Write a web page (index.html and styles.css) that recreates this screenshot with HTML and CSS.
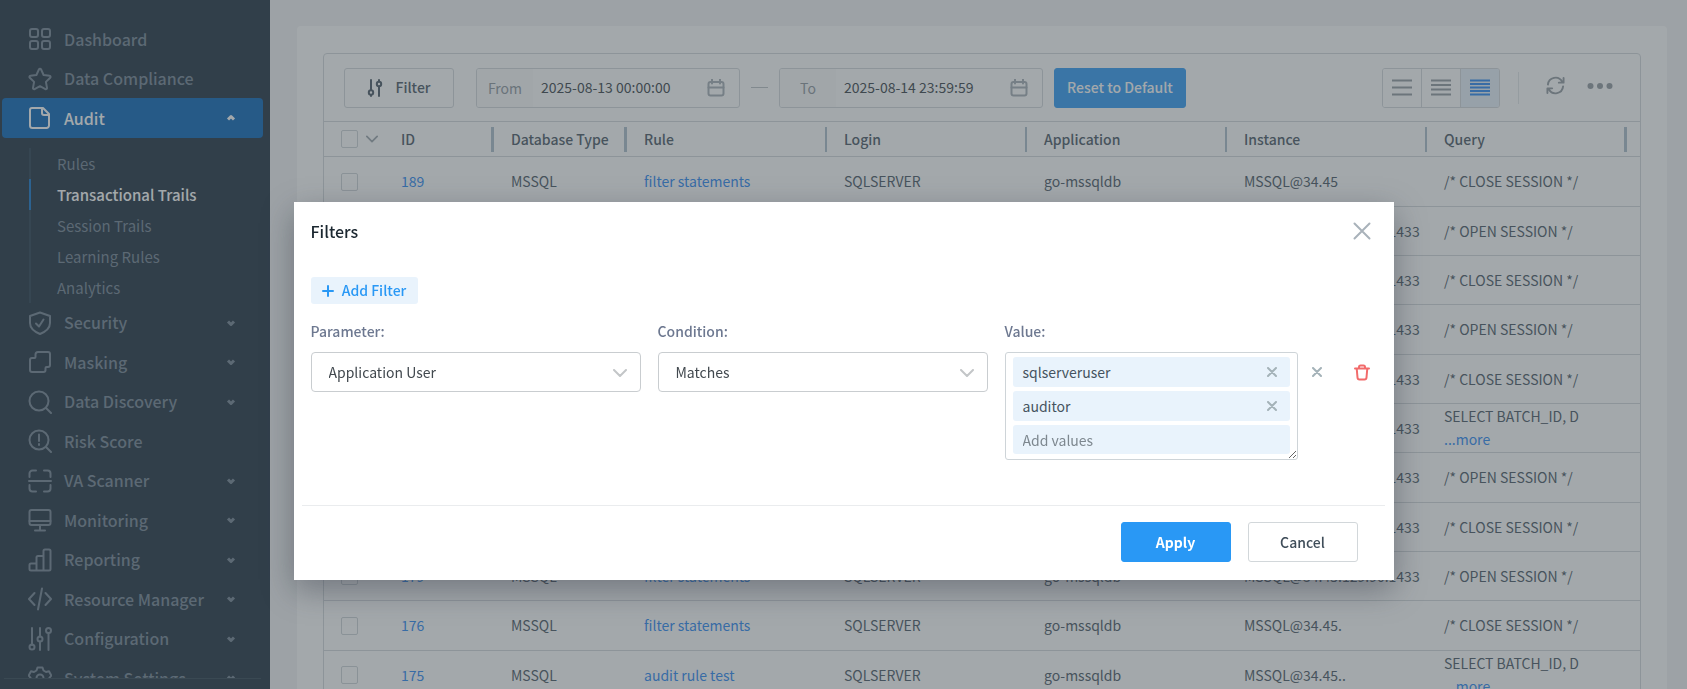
FILE: index.html
```html
<!DOCTYPE html>
<html lang="en">
<head>
<meta charset="utf-8">
<title>Transactional Trails</title>
<link rel="stylesheet" href="styles.css">
</head>
<body>
<div class="app">
  <aside class="sidebar">
    <nav class="nav-scroll" aria-label="Main">
      <ul class="nav">
        <li><a class="nav-link" href="#"><svg class="icon" viewBox="0 0 24 24"><rect x="2" y="2" width="8" height="8" rx="2"/><rect x="14" y="2" width="8" height="8" rx="2"/><rect x="2" y="14" width="8" height="8" rx="2"/><rect x="14" y="14" width="8" height="8" rx="2"/></svg><span>Dashboard</span></a></li>
        <li><a class="nav-link" href="#"><svg class="icon" viewBox="0 0 24 24"><path d="M12 1.800c.5 0 .9.3 1.100.7l2.500 5.500 6 .8c1 .1 1.300 1.200.6 1.900l-4.300 4.200 1.100 6c.2 1-.8 1.600-1.600 1.200L12 19.200l-5.400 2.900c-.8.4-1.800-.2-1.600-1.200l1.100-6-4.300-4.200c-.7-.7-.4-1.800.6-1.900l6-.8 2.500-5.500c.2-.4.6-.7 1.100-.7z"/></svg><span>Data Compliance</span></a></li>
        <li><a class="nav-link nav-link-active" href="#"><svg class="icon" viewBox="0 0 24 24"><path d="M4 2h11l6 6v11.500a2.500 2.500 0 0 1-2.500 2.500h-14A2.500 2.500 0 0 1 2 19.500V4a2 2 0 0 1 2-2z"/><path d="M14 2v5a2 2 0 0 0 2 2h5"/></svg><span>Audit</span><svg class="caret" viewBox="0 0 10 10"><path d="M2 6.500 5 3.500l3 3"/></svg></a>
          <ul class="subnav">
            <li><a href="#">Rules</a></li>
            <li class="current"><a href="#" aria-current="page">Transactional Trails</a></li>
            <li><a href="#">Session Trails</a></li>
            <li><a href="#">Learning Rules</a></li>
            <li><a href="#">Analytics</a></li>
          </ul>
        </li>
        <li><a class="nav-link" href="#"><svg class="icon" viewBox="0 0 24 24"><path d="M12 1.500 22 5v7c0 5-4 8.500-10 11C6 20.500 2 17 2 12V5z"/><path d="m8 12.500 3 3L15.500 8.500"/></svg><span>Security</span><svg class="caret" viewBox="0 0 10 10"><path d="m2 3.500 3 3 3-3"/></svg></a></li>
        <li><a class="nav-link" href="#"><svg class="icon" viewBox="0 0 24 24"><path d="M10 2h10a2 2 0 0 1 2 2v11a2 2 0 0 1-2 2h-1.500a1 1 0 0 0-1 1v2a2 2 0 0 1-2 2H4a2 2 0 0 1-2-2V10a2 2 0 0 1 2-2h2.500a1 1 0 0 0 1-1V4.500A2.500 2.500 0 0 1 10 2z"/></svg><span>Masking</span><svg class="caret" viewBox="0 0 10 10"><path d="m2 3.500 3 3 3-3"/></svg></a></li>
        <li><a class="nav-link" href="#"><svg class="icon" viewBox="0 0 24 24"><circle cx="11" cy="11" r="9.500"/><path d="m18 18 5 5"/></svg><span>Data Discovery</span><svg class="caret" viewBox="0 0 10 10"><path d="m2 3.500 3 3 3-3"/></svg></a></li>
        <li><a class="nav-link" href="#"><svg class="icon" viewBox="0 0 24 24"><circle cx="11" cy="11" r="9.500"/><path d="m18 18 5 5M11 5.500v6.500M11 15v1"/></svg><span>Risk Score</span></a></li>
        <li><a class="nav-link" href="#"><svg class="icon" viewBox="0 0 24 24"><path d="M1.500 8V4.500a3 3 0 0 1 3-3H8M16 1.500h3.500a3 3 0 0 1 3 3V8M22.500 16v3.500a3 3 0 0 1-3 3H16M8 22.500H4.500a3 3 0 0 1-3-3V16M1 12h22"/></svg><span>VA Scanner</span><svg class="caret" viewBox="0 0 10 10"><path d="m2 3.500 3 3 3-3"/></svg></a></li>
        <li><a class="nav-link" href="#"><svg class="icon" viewBox="0 0 24 24"><rect x="1.500" y="2" width="21" height="15" rx="2"/><path d="M1.500 13h21M12 17v5M7 22.500h10"/></svg><span>Monitoring</span><svg class="caret" viewBox="0 0 10 10"><path d="m2 3.500 3 3 3-3"/></svg></a></li>
        <li><a class="nav-link" href="#"><svg class="icon" viewBox="0 0 24 24"><path d="M8.500 22.500H3A1.500 1.500 0 0 1 1.500 21v-4A1.500 1.500 0 0 1 3 15.500h5.500zM8.500 22.500V9.500A1.500 1.500 0 0 1 10 8h5.500v14.500zM15.500 22.500V3A1.500 1.500 0 0 1 17 1.500h4A1.500 1.500 0 0 1 22.500 3v18a1.500 1.500 0 0 1-1.500 1.500z"/></svg><span>Reporting</span><svg class="caret" viewBox="0 0 10 10"><path d="m2 3.500 3 3 3-3"/></svg></a></li>
        <li><a class="nav-link" href="#"><svg class="icon" viewBox="0 0 24 24"><path d="M6.500 6 1 12l5.500 6M17.500 6l5.500 6-5.500 6M14 1.500 10 22.500"/></svg><span>Resource Manager</span><svg class="caret" viewBox="0 0 10 10"><path d="m2 3.500 3 3 3-3"/></svg></a></li>
        <li><a class="nav-link" href="#"><svg class="icon" viewBox="0 0 24 24"><path d="M4 1v17M12 1v8.500M12 14.500V23M20.500 6v17"/><circle cx="4" cy="20" r="2.500"/><circle cx="12" cy="12" r="2.500"/><circle cx="20.500" cy="3.500" r="2.500"/></svg><span>Configuration</span><svg class="caret" viewBox="0 0 10 10"><path d="m2 3.500 3 3 3-3"/></svg></a></li>
        <li><a class="nav-link" href="#"><svg class="icon" viewBox="0 0 24 24"><path d="M9.500 1.500h5l1 3 2.500 1.500 3-.7 2.300 4.200-2 2.500 2 2.500-2.300 4.200-3-.7-2.500 1.500-1 3h-5l-1-3L6 18l-3 .7L.7 14.500l2-2.500-2-2.500L3 5.300 6 6l2.500-1.500z"/><circle cx="12" cy="12" r="3.500"/></svg><span>System Settings</span><svg class="caret" viewBox="0 0 10 10"><path d="m2 3.500 3 3 3-3"/></svg></a></li>
      </ul>
    </nav>
    <div class="sidebar-foot"></div>
  </aside>

  <main class="content">
    <section class="card">
      <div class="panel">
        <div class="toolbar">
          <button class="btn btn-filter" type="button"><svg class="filter-icon" viewBox="0 0 16 18"><path d="M4 1v10M12 8v9"/><circle cx="4" cy="13.500" r="2.200"/><path d="M4 16v1M12 1v1"/><circle cx="12" cy="5" r="2.200"/></svg>Filter</button>
          <div class="date-range">
            <div class="date-box"><label class="date-label" for="from">From</label><input class="date-input" id="from" type="text" value="2025-08-13 00:00:00"><svg class="calendar" viewBox="0 0 18 18"><rect x="1.500" y="3" width="15" height="13.500" rx="2"/><path d="M1.500 8.500h15M5 .5v4M13 .5v4"/></svg></div>
            <span class="dash"></span>
            <div class="date-box"><label class="date-label" for="to">To</label><input class="date-input" id="to" type="text" value="2025-08-14 23:59:59"><svg class="calendar" viewBox="0 0 18 18"><rect x="1.500" y="3" width="15" height="13.500" rx="2"/><path d="M1.500 8.500h15M5 .5v4M13 .5v4"/></svg></div>
          </div>
          <button class="btn btn-reset" type="button">Reset to Default</button>
          <div class="views">
            <button type="button" aria-label="Loose rows"><svg viewBox="0 0 20 17"><path d="M0 1.500h20M0 8.500h20M0 15.500h20"/></svg></button>
            <button type="button" aria-label="Medium rows"><svg viewBox="0 0 20 17"><path d="M0 1.500h20M0 6h20M0 10.500h20M0 15.500h20"/></svg></button>
            <button type="button" class="selected" aria-label="Dense rows"><svg viewBox="0 0 20 17"><path d="M0 1.500h20M0 5h20M0 8.500h20M0 12h20M0 15.500h20"/></svg></button>
          </div>
          <span class="divider"></span>
          <button class="icon-btn" type="button" aria-label="Refresh"><svg class="refresh" viewBox="0 0 20 20"><path d="M2 9a8 8 0 0 1 15-3M18 11a8 8 0 0 1-15 3M18.500 2v5h-5M1.500 18v-5h5"/></svg></button>
          <button class="icon-btn" type="button" aria-label="More"><svg class="dots" viewBox="0 0 26 8"><circle cx="3.500" cy="4" r="3"/><circle cx="13" cy="4" r="3"/><circle cx="22.500" cy="4" r="3"/></svg></button>
        </div>
        <table class="grid">
          <colgroup><col class="c-check"><col class="c-id"><col class="c-db"><col class="c-wide"><col class="c-wide"><col class="c-wide"><col class="c-wide"><col class="c-wide"><col></colgroup>
          <thead>
            <tr>
              <th><div class="th-check"><input type="checkbox" aria-label="Select all"><svg class="small-chevron" viewBox="0 0 14 8"><path d="m1 1 6 6 6-6"/></svg></div></th>
              <th><div class="th wide-bar">ID</div></th><th><div class="th wide-bar">Database Type</div></th><th><div class="th">Rule</div></th><th><div class="th">Login</div></th><th><div class="th">Application</div></th><th><div class="th">Instance</div></th><th><div class="th wide-bar">Query</div></th><th></th>
            </tr>
          </thead>
          <tbody>
            <tr><td><input type="checkbox" aria-label="Select 189"></td><td><a href="#">189</a></td><td>MSSQL</td><td><a href="#">filter statements</a></td><td>SQLSERVER</td><td>go-mssqldb</td><td>MSSQL@34.45</td><td>/* CLOSE SESSION */</td><td></td></tr>
            <tr><td><input type="checkbox" aria-label="Select 188"></td><td><a href="#">188</a></td><td>MSSQL</td><td><a href="#">filter statements</a></td><td>SQLSERVER</td><td>go-mssqldb</td><td>MSSQL@34.45.129.90:1433</td><td>/* OPEN SESSION */</td><td></td></tr>
            <tr><td><input type="checkbox" aria-label="Select 187"></td><td><a href="#">187</a></td><td>MSSQL</td><td><a href="#">filter statements</a></td><td>SQLSERVER</td><td>go-mssqldb</td><td>MSSQL@34.45.129.90:1433</td><td>/* CLOSE SESSION */</td><td></td></tr>
            <tr><td><input type="checkbox" aria-label="Select 186"></td><td><a href="#">186</a></td><td>MSSQL</td><td><a href="#">filter statements</a></td><td>SQLSERVER</td><td>go-mssqldb</td><td>MSSQL@34.45.129.90:1433</td><td>/* OPEN SESSION */</td><td></td></tr>
            <tr><td><input type="checkbox" aria-label="Select 185"></td><td><a href="#">185</a></td><td>MSSQL</td><td><a href="#">filter statements</a></td><td>SQLSERVER</td><td>go-mssqldb</td><td>MSSQL@34.45.129.90:1433</td><td>/* CLOSE SESSION */</td><td></td></tr>
            <tr><td><input type="checkbox" aria-label="Select 184"></td><td><a href="#">184</a></td><td>MSSQL</td><td><a href="#">audit rule test</a></td><td>SQLSERVER</td><td>go-mssqldb</td><td>MSSQL@34.45.129.90:1433</td><td>SELECT BATCH_ID, D<br><a href="#">...more</a></td><td></td></tr>
            <tr><td><input type="checkbox" aria-label="Select 183"></td><td><a href="#">183</a></td><td>MSSQL</td><td><a href="#">filter statements</a></td><td>SQLSERVER</td><td>go-mssqldb</td><td>MSSQL@34.45.129.90:1433</td><td>/* OPEN SESSION */</td><td></td></tr>
            <tr><td><input type="checkbox" aria-label="Select 180"></td><td><a href="#">180</a></td><td>MSSQL</td><td><a href="#">filter statements</a></td><td>SQLSERVER</td><td>go-mssqldb</td><td>MSSQL@34.45.129.90:1433</td><td>/* CLOSE SESSION */</td><td></td></tr>
            <tr><td><input type="checkbox" aria-label="Select 179"></td><td><a href="#">179</a></td><td>MSSQL</td><td><a href="#">filter statements</a></td><td>SQLSERVER</td><td>go-mssqldb</td><td>MSSQL@34.45.129.90.1433</td><td>/* OPEN SESSION */</td><td></td></tr>
            <tr><td><input type="checkbox" aria-label="Select 176"></td><td><a href="#">176</a></td><td>MSSQL</td><td><a href="#">filter statements</a></td><td>SQLSERVER</td><td>go-mssqldb</td><td>MSSQL@34.45.</td><td>/* CLOSE SESSION */</td><td></td></tr>
            <tr><td><input type="checkbox" aria-label="Select 175"></td><td><a href="#">175</a></td><td>MSSQL</td><td><a href="#">audit rule test</a></td><td>SQLSERVER</td><td>go-mssqldb</td><td>MSSQL@34.45..</td><td>SELECT BATCH_ID, D<br><a href="#">...more</a></td><td></td></tr>
          </tbody>
        </table>
      </div>
    </section>
  </main>
</div>

<div class="backdrop">
  <section class="modal" role="dialog" aria-modal="true" aria-labelledby="modal-title">
    <header class="modal-head">
      <h2 id="modal-title">Filters</h2>
      <button class="plain" type="button" aria-label="Close"><svg class="close" viewBox="0 0 18 18"><path d="m1.500 1.500 15 15M16.500 1.500l-15 15"/></svg></button>
    </header>
    <div class="modal-body">
      <button class="add-filter" type="button"><svg viewBox="0 0 12 12"><path d="M6 1v10M1 6h10"/></svg>Add Filter</button>
      <div class="filter-row">
        <div class="field"><label for="parameter">Parameter:</label><div class="select"><select id="parameter"><option>Application User</option></select><svg class="select-chevron" viewBox="0 0 14 8"><path d="m1 1 6 6 6-6"/></svg></div></div>
        <div class="field"><label for="condition">Condition:</label><div class="select"><select id="condition"><option>Matches</option></select><svg class="select-chevron" viewBox="0 0 14 8"><path d="m1 1 6 6 6-6"/></svg></div></div>
        <div class="field"><label for="values">Value:</label>
          <div class="values">
            <div class="chip"><span>sqlserveruser</span><button class="plain" type="button" aria-label="Remove sqlserveruser"><svg class="remove" viewBox="0 0 10 10"><path d="m1 1 8 8M9 1 1 9"/></svg></button></div>
            <div class="chip"><span>auditor</span><button class="plain" type="button" aria-label="Remove auditor"><svg class="remove" viewBox="0 0 10 10"><path d="m1 1 8 8M9 1 1 9"/></svg></button></div>
            <input class="chip chip-input" id="values" type="text" placeholder="Add values">
          </div>
        </div>
        <div class="row-actions">
          <button class="plain" type="button" aria-label="Clear values"><svg class="remove" viewBox="0 0 10 10"><path d="m1 1 8 8M9 1 1 9"/></svg></button>
          <button class="plain" type="button" aria-label="Delete filter"><svg class="trash" viewBox="0 0 16 17"><path d="M1 4.500h14M5 4.200V3a1.500 1.500 0 0 1 1.500-1.500h3A1.500 1.500 0 0 1 11 3v1.200M2.700 4.500l.8 9a2 2 0 0 0 2 1.900h5a2 2 0 0 0 2-1.900l.8-9"/></svg></button>
        </div>
      </div>
    </div>
    <footer class="modal-foot">
      <button class="btn btn-apply" type="button">Apply</button>
      <button class="btn btn-cancel" type="button">Cancel</button>
    </footer>
  </section>
</div>
</body>
</html>
```
FILE: styles.css
```css
:root {
  --line: #d2d7da;
  --text: #455360;
  --link: #2585f3;
  --primary: #2998f5;
  --muted: #8b949c;
}
* { box-sizing: border-box; }
body {
  margin: 0;
  background: #f2f3f4;
  color: var(--text);
  font: 14px/23px "Noto Sans CJK SC", "Noto Sans", sans-serif;
}
button, input, select { font: inherit; color: inherit; }
button { cursor: pointer; padding: 0; }
a { color: var(--link); text-decoration: none; }
ul { list-style: none; margin: 0; padding: 0; }
svg { display: block; flex: none; fill: none; stroke: currentColor; stroke-width: 2; stroke-linecap: round; stroke-linejoin: round; }

.app { display: flex; height: 100vh; overflow: hidden; }

/* Sidebar */
.sidebar { display: flex; flex-direction: column; width: 270px; flex: none; background: #18293a; color: #6e7f8f; }
.nav-scroll { flex: 1; min-height: 0; overflow: hidden; padding: 19px 7px 0 2px; }
.nav-link { display: flex; align-items: center; height: 40px; padding: 0 27px 0 26px; border-radius: 4px; color: inherit; font-size: 16px; font-weight: 500; }
.nav > li:nth-child(even) > .nav-link { height: 39px; }
.nav-link-active { background: #0060b6; color: #fff; }
.icon { width: 24px; height: 24px; margin-right: 12px; }
.caret { width: 10px; height: 10px; margin-left: auto; stroke-width: 3; stroke-linecap: butt; }
.subnav { margin: 10px 0 0 27px; border-left: 2px solid #22384a; }
.subnav li { padding-left: 26px; line-height: 31px; font-size: 15px; }
.subnav a { color: inherit; }
.subnav .current { margin-left: -2px; padding-left: 26px; border-left: 2px solid #0d70c8; color: #fff; font-weight: 500; }
.sidebar-foot { height: 11px; margin: 0 9px 0 4px; border-top: 1px solid #2a3d4c; }

/* Content */
.content { flex: 1; min-width: 0; padding: 26px 20px 0 27px; }
.card { padding: 27px 26px 0; background: #fff; border-radius: 4px; min-height: 100%; }
.panel { border: 1px solid var(--line); border-radius: 4px; }
.toolbar { display: flex; align-items: center; height: 67px; padding: 0 23px 0 20px; }
.btn { display: inline-flex; align-items: center; justify-content: center; height: 40px; min-width: 110px; border: 1px solid var(--line); border-radius: 3px; background: #fff; font-weight: 500; }
.btn-filter { gap: 12px; margin-right: 22px; }
.filter-icon { width: 16px; height: 18px; }
.date-range { display: flex; align-items: center; gap: 11px; margin-right: 11px; }
.date-box { display: flex; align-items: center; width: 264px; height: 40px; padding-right: 14px; border: 1px solid var(--line); border-radius: 3px; overflow: hidden; }
.date-label { flex: none; width: 56px; line-height: 38px; text-align: center; color: var(--muted); background: #fafbfb; }
.date-input { flex: 1; min-width: 0; padding: 0 0 0 8px; border: 0; background: none; color: #333c44; }
.calendar { width: 18px; height: 18px; color: #a3acb4; }
.dash { width: 17px; height: 1px; background: #b9c0c5; }
.btn-reset { width: 132px; border-color: var(--primary); background: var(--primary); color: #fff; }
.views { display: flex; margin-left: auto; border: 1px solid var(--line); border-radius: 3px; overflow: hidden; }
.views button { display: grid; place-items: center; width: 38px; height: 38px; border: 0; background: #fff; color: #8f979e; }
.views button + button { width: 39px; border-left: 1px solid var(--line); }
.views .selected { background: #e7f0fb; color: var(--link); }
.views svg { width: 20px; height: 17px; stroke-linecap: butt; }
.divider { width: 1px; height: 32px; margin: 0 27px 0 18px; background: #e2e6e8; }
.icon-btn { border: 0; background: none; color: #8f979e; margin-right: 22px; padding-bottom: 4px; }
.icon-btn:last-child { margin-right: 4px; }
.refresh { width: 19px; height: 19px; }
.dots { width: 26px; height: 8px; fill: currentColor; stroke: none; }

.grid { width: 100%; table-layout: fixed; border-collapse: collapse; }
.c-check { width: 60px; }
.c-id { width: 110px; }
.c-db { width: 133px; }
.c-wide { width: 200px; }
.grid th, .grid td { padding: 0 0 0 17px; text-align: left; border-top: 1px solid var(--line); vertical-align: middle; }
.grid th { height: 35px; }
.grid td { height: 49px; white-space: nowrap; }
.grid tbody tr:nth-child(3n+1) td { height: 50px; }
.th { height: 25px; line-height: 25px; border-right: 2px solid #a9bccb; font-weight: 500; }
.wide-bar { border-right-width: 3px; }
.th-check { display: flex; align-items: center; gap: 8px; }
.small-chevron { width: 12px; height: 8px; color: #9aa3aa; stroke-width: 2; }
input[type="checkbox"] { appearance: none; display: block; width: 17px; height: 18px; margin: 0; border: 1px solid #ccd2d6; border-radius: 2px; }

/* Modal */
.backdrop { position: fixed; inset: 0; display: flex; justify-content: center; align-items: flex-start; padding-top: 202px; background: rgba(74, 84, 90, 0.51); }
.modal { width: 1100px; max-width: 100%; background: #fff; box-shadow: 0 10px 30px rgba(40, 45, 60, 0.4); }
.plain { display: grid; place-items: center; border: 0; background: none; }
.modal-head { display: flex; justify-content: space-between; align-items: center; padding: 17px 23px 0 17px; }
.modal-head h2 { margin: 0; font-size: 16px; line-height: 24px; font-weight: 500; color: #1b2730; }
.close { width: 18px; height: 18px; color: #a9b2ba; }
.modal-body { padding: 34px 17px 45px; }
.add-filter { display: flex; align-items: center; justify-content: center; gap: 8px; width: 107px; height: 27px; border: 0; border-radius: 3px; background: #e9f3fc; color: var(--primary); font-weight: 500; }
.add-filter svg { width: 12px; height: 12px; }
.filter-row { display: grid; grid-template-columns: 330fr 330fr 293fr 62px; column-gap: 17px; margin-top: 16px; }
.field label { display: block; margin-bottom: 9px; font-weight: 500; color: #6d7890; }
.select { position: relative; }
.select select { appearance: none; display: block; width: 100%; height: 40px; padding: 0 40px 0 17px; border: 1px solid #c9cdd0; border-radius: 4px; background: #fff; color: #41484e; }
.select-chevron { position: absolute; right: 14px; top: 17px; width: 14px; height: 8px; color: #c3c6c8; pointer-events: none; }
.values { display: grid; gap: 4px; padding: 4px 7px 5px; border: 1px solid #ced4d8; border-radius: 3px; overflow: hidden; resize: both; }
.chip { display: flex; align-items: center; justify-content: space-between; width: 100%; height: 30px; padding: 0 13px 0 10px; border: 0; border-radius: 3px; background: #e9f3fc; }
.chip-input { height: 29px; }
.chip-input::placeholder { color: #7d878f; opacity: 1; }
.remove { width: 10px; height: 10px; color: #a4b2b8; }
.row-actions { display: flex; align-items: flex-start; gap: 32px; margin-top: 32px; }
.row-actions .plain { height: 40px; }
.row-actions .remove { margin-left: -3px; }
.trash { width: 16px; height: 17px; color: #f26b6b; }
.modal-foot { display: flex; justify-content: flex-end; gap: 17px; margin: 0 9px 0 8px; padding: 16px 27px 18px 0; border-top: 1px solid #eaecee; }
.btn-apply { border-color: var(--primary); background: var(--primary); color: #fff; font-weight: 700; }
.btn-cancel { color: #3f4d59; }
```
